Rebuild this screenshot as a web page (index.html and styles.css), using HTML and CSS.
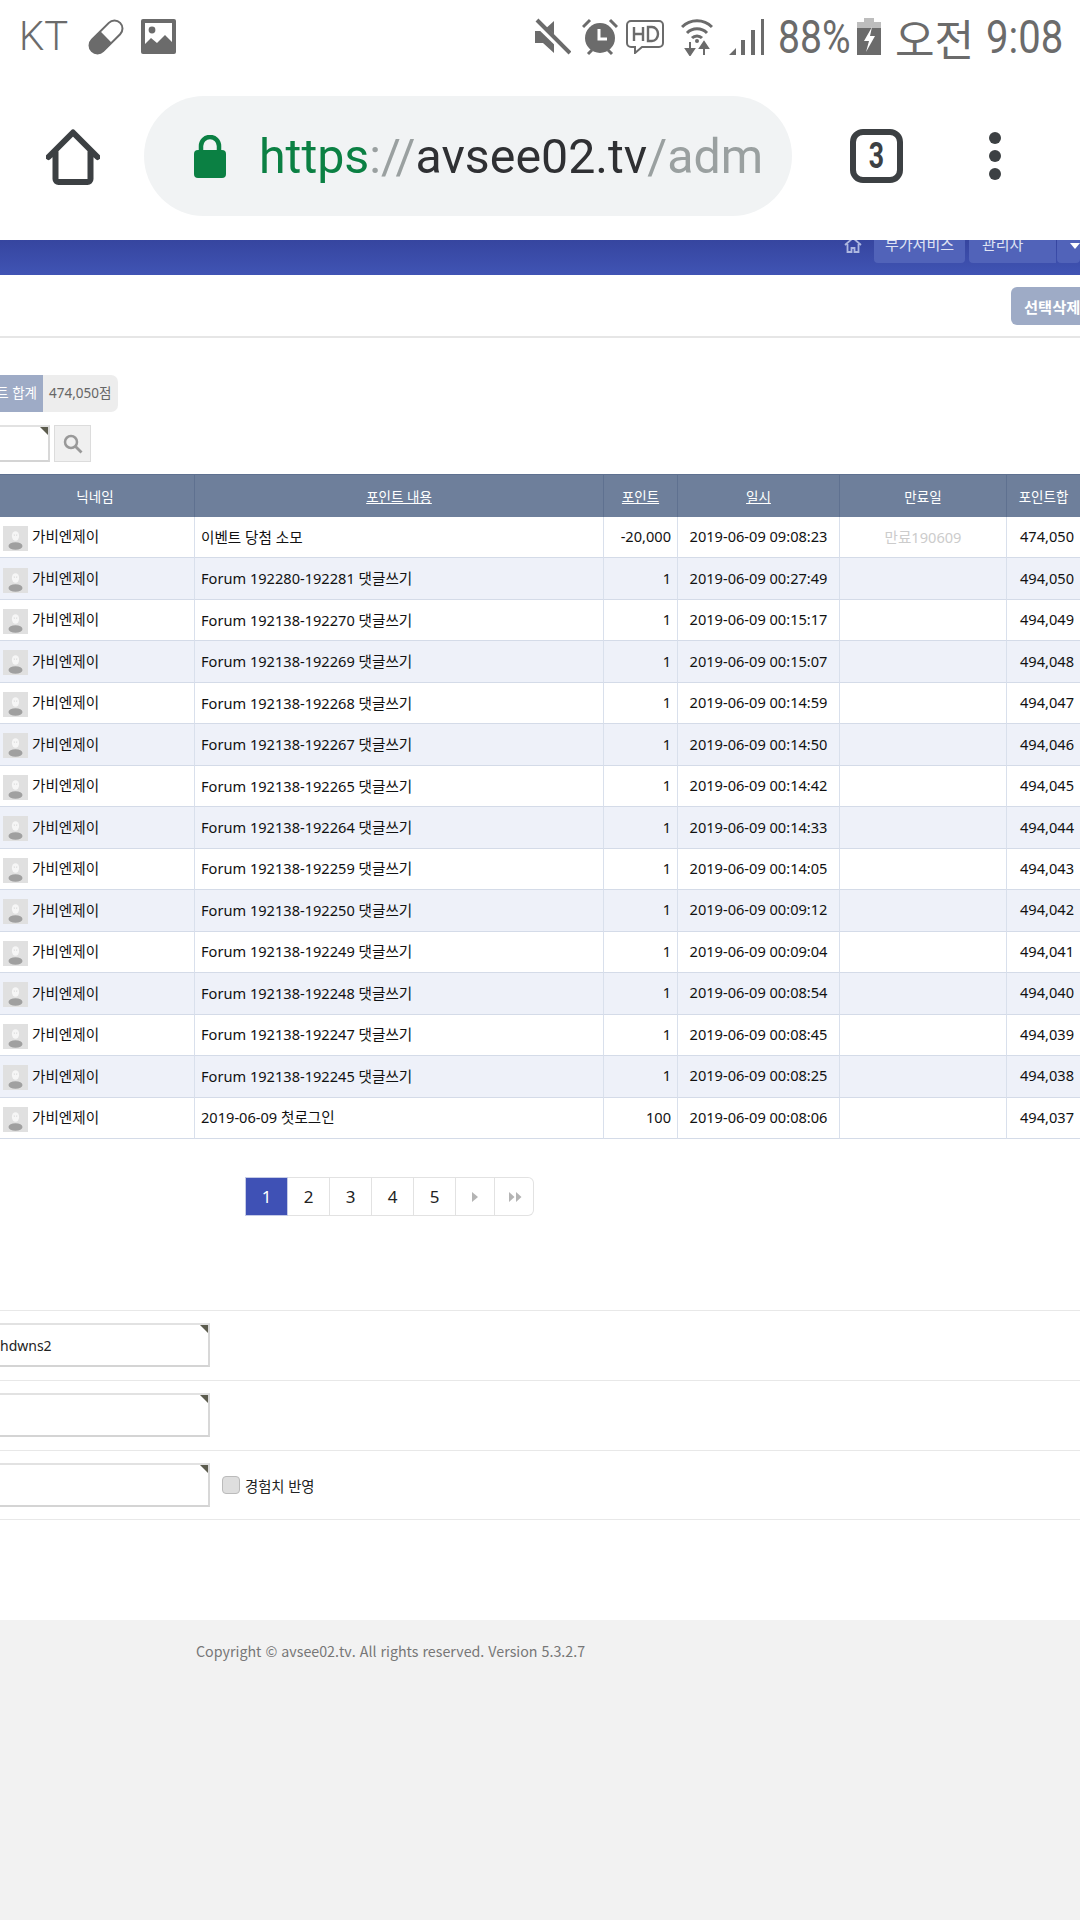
FILE: index.html
```html
<!DOCTYPE html>
<html lang="ko">
<head>
<meta charset="utf-8">
<title>포인트 관리</title>
<link rel="stylesheet" href="styles.css">
</head>
<body>
<svg class="defs" width="0" height="0" aria-hidden="true">
  <symbol id="person" viewBox="0 0 25 25">
    <rect width="25" height="25" fill="#e0e0e0"/>
    <ellipse cx="12.5" cy="10" rx="3.600" ry="4.800" fill="#f6f6f6"/>
    <rect x="10.800" y="8.600" width="1" height="1" fill="#cfcfcf"/>
    <rect x="13.200" y="8.600" width="1" height="1" fill="#cfcfcf"/>
    <ellipse cx="12.5" cy="20" rx="7" ry="3.800" fill="#a0a0a0"/>
  </symbol>
</svg>

<header class="status">
  <div class="status-left">
    <span class="carrier">KT</span>
    <svg class="ic-pill" width="36" height="36" viewBox="0 0 36 36"><g transform="rotate(-45 18 18)"><rect x="-2" y="10" width="40" height="16" rx="8" fill="#fff" stroke="#6b6b6b" stroke-width="2"/><path d="M6 10h12v16H6a8 8 0 0 1 0-16z" fill="#6b6b6b"/></g></svg>
    <svg class="ic-img" width="35" height="35" viewBox="0 0 35 35"><rect width="35" height="35" rx="2" fill="#6b6b6b"/><rect x="4" y="4" width="27" height="27" fill="#fff"/><circle cx="11" cy="11" r="3.4" fill="#6b6b6b"/><path d="M4 25l6-6 6 5 8-8 7 7v12H4z" fill="#6b6b6b"/></svg>
  </div>
  <div class="status-right">
    <svg class="ic-mute" width="38" height="38" viewBox="0 0 38 38"><path d="M2 13h8L21 3v32L10 25H2z" fill="#6b6b6b"/><path d="M2 3l34 33" stroke="#fff" stroke-width="7"/><path d="M4 2l33 33" stroke="#6b6b6b" stroke-width="4"/></svg>
    <svg class="ic-alarm" width="36" height="38" viewBox="0 0 36 38"><circle cx="18" cy="20" r="15" fill="#6b6b6b"/><path d="M17 11v10h8" fill="none" stroke="#fff" stroke-width="3"/><path d="M1 9l7-7M35 9l-7-7M6 36l4-4M30 36l-4-4" stroke="#6b6b6b" stroke-width="3"/></svg>
    <svg class="ic-hd" width="38" height="34" viewBox="0 0 38 34"><path d="M5 1h28a4 4 0 0 1 4 4v18a4 4 0 0 1-4 4H16l-7 6v-6H5a4 4 0 0 1-4-4V5a4 4 0 0 1 4-4z" fill="#fff" stroke="#6b6b6b" stroke-width="2"/><path d="M8 7v14M17 7v14M8 14h9M22 7v14h4a6 7 0 0 0 0-14z" fill="none" stroke="#6b6b6b" stroke-width="2.4"/></svg>
    <svg class="ic-wifi" width="32" height="38" viewBox="0 0 32 38"><g fill="none" stroke="#6b6b6b" stroke-width="3"><path d="M1 9a21 21 0 0 1 30 0"/><path d="M6 15a14 14 0 0 1 20 0"/><path d="M11 20a7 7 0 0 1 10 0"/></g><circle cx="16" cy="23" r="2" fill="#6b6b6b"/><path d="M9 24v10M5 31l4 6 4-6zM23 37V27M19 30l4-6 4 6z" fill="#6b6b6b" stroke="#6b6b6b" stroke-width="2"/></svg>
    <svg class="ic-signal" width="36" height="36" viewBox="0 0 36 36"><path d="M0 36l7-7v7zM12 36V21h4v15zM22 36V11h4v25zM32 36V0h3v36z" fill="#6b6b6b"/></svg>
    <span class="stat-text stat-pct">88%</span>
    <svg class="ic-batt" width="24" height="37" viewBox="0 0 24 37"><path d="M7 0h10v4H7z" fill="#bdbdbd"/><path d="M0 4h24v6H0z" fill="#bdbdbd"/><path d="M0 10h24v27H0z" fill="#6b6b6b"/><path d="M15 9l-8 14h5l-3 11 9-16h-5z" fill="#fff"/></svg>
    <span class="stat-text stat-ampm">오전</span>
    <span class="stat-text stat-time">9:08</span>
  </div>
</header>

<nav class="toolbar">
  <svg class="ic-home" width="54" height="56" viewBox="0 0 54 56"><path d="M2.500 28L27 3.500 51.500 28M9.500 23v27a3 3 0 0 0 3 3h29a3 3 0 0 0 3-3V23" fill="none" stroke="#3c4043" stroke-width="6" stroke-linecap="round" stroke-linejoin="round"/></svg>
  <div class="omnibox">
    <svg class="ic-lock" width="32" height="43" viewBox="0 0 32 43"><path d="M7 17V11a9 9 0 0 1 18 0v6" fill="none" stroke="#0b8043" stroke-width="4.500"/><rect y="15" width="32" height="28" rx="4" fill="#0b8043"/></svg>
    <span class="url"><span class="u-green">https</span><span class="u-gray">://</span><span class="u-dark">avsee02.tv</span><span class="u-gray">/adm</span></span>
  </div>
  <div class="tabs"><span>3</span></div>
  <div class="dots"><i></i><i></i><i></i></div>
</nav>

<main class="page">
  <div class="topbar">
    <svg class="ic-site-home" width="18" height="17" viewBox="0 0 18 17"><path d="M1 8l8-7 8 7M3.500 7v8h4v-4h3v4h4V7" fill="none" stroke="#aeb8e0" stroke-width="1.800"/></svg>
    <span class="top-tab tab-a">부가서비스</span>
    <span class="top-tab tab-b">관리자</span>
    <span class="top-tab tab-c"></span>
  </div>

  <div class="actions"><button class="btn-del">선택삭제</button></div>

  <div class="summary">
    <span class="sum-label"><span>포인트 합계</span></span>
    <span class="sum-value">474,050점</span>
  </div>

  <div class="search">
    <span class="field field-search"></span>
    <button class="btn-search" aria-label="검색"><svg width="20" height="20" viewBox="0 0 20 20"><circle cx="8" cy="8" r="6" fill="none" stroke="#999" stroke-width="2.500"/><path d="M12.500 12.500l6 6" stroke="#999" stroke-width="2.800"/></svg></button>
  </div>

  <table class="grid">
    <colgroup><col class="c1"><col class="c2"><col class="c3"><col class="c4"><col class="c5"><col class="c6"></colgroup>
    <thead>
      <tr><th class="th-nick">닉네임</th><th><u>포인트 내용</u></th><th><u>포인트</u></th><th><u>일시</u></th><th>만료일</th><th>포인트합</th></tr>
    </thead>
    <tbody>
      <tr><td class="nick"><svg class="avatar"><use href="#person"/></svg>가비엔제이</td><td>이벤트 당첨 소모</td><td class="num">-20,000</td><td class="date">2019-06-09 09:08:23</td><td class="exp">만료190609</td><td class="num">474,050</td></tr>
      <tr><td class="nick"><svg class="avatar"><use href="#person"/></svg>가비엔제이</td><td>Forum 192280-192281 댓글쓰기</td><td class="num">1</td><td class="date">2019-06-09 00:27:49</td><td class="exp"></td><td class="num">494,050</td></tr>
      <tr><td class="nick"><svg class="avatar"><use href="#person"/></svg>가비엔제이</td><td>Forum 192138-192270 댓글쓰기</td><td class="num">1</td><td class="date">2019-06-09 00:15:17</td><td class="exp"></td><td class="num">494,049</td></tr>
      <tr><td class="nick"><svg class="avatar"><use href="#person"/></svg>가비엔제이</td><td>Forum 192138-192269 댓글쓰기</td><td class="num">1</td><td class="date">2019-06-09 00:15:07</td><td class="exp"></td><td class="num">494,048</td></tr>
      <tr><td class="nick"><svg class="avatar"><use href="#person"/></svg>가비엔제이</td><td>Forum 192138-192268 댓글쓰기</td><td class="num">1</td><td class="date">2019-06-09 00:14:59</td><td class="exp"></td><td class="num">494,047</td></tr>
      <tr><td class="nick"><svg class="avatar"><use href="#person"/></svg>가비엔제이</td><td>Forum 192138-192267 댓글쓰기</td><td class="num">1</td><td class="date">2019-06-09 00:14:50</td><td class="exp"></td><td class="num">494,046</td></tr>
      <tr><td class="nick"><svg class="avatar"><use href="#person"/></svg>가비엔제이</td><td>Forum 192138-192265 댓글쓰기</td><td class="num">1</td><td class="date">2019-06-09 00:14:42</td><td class="exp"></td><td class="num">494,045</td></tr>
      <tr><td class="nick"><svg class="avatar"><use href="#person"/></svg>가비엔제이</td><td>Forum 192138-192264 댓글쓰기</td><td class="num">1</td><td class="date">2019-06-09 00:14:33</td><td class="exp"></td><td class="num">494,044</td></tr>
      <tr><td class="nick"><svg class="avatar"><use href="#person"/></svg>가비엔제이</td><td>Forum 192138-192259 댓글쓰기</td><td class="num">1</td><td class="date">2019-06-09 00:14:05</td><td class="exp"></td><td class="num">494,043</td></tr>
      <tr><td class="nick"><svg class="avatar"><use href="#person"/></svg>가비엔제이</td><td>Forum 192138-192250 댓글쓰기</td><td class="num">1</td><td class="date">2019-06-09 00:09:12</td><td class="exp"></td><td class="num">494,042</td></tr>
      <tr><td class="nick"><svg class="avatar"><use href="#person"/></svg>가비엔제이</td><td>Forum 192138-192249 댓글쓰기</td><td class="num">1</td><td class="date">2019-06-09 00:09:04</td><td class="exp"></td><td class="num">494,041</td></tr>
      <tr><td class="nick"><svg class="avatar"><use href="#person"/></svg>가비엔제이</td><td>Forum 192138-192248 댓글쓰기</td><td class="num">1</td><td class="date">2019-06-09 00:08:54</td><td class="exp"></td><td class="num">494,040</td></tr>
      <tr><td class="nick"><svg class="avatar"><use href="#person"/></svg>가비엔제이</td><td>Forum 192138-192247 댓글쓰기</td><td class="num">1</td><td class="date">2019-06-09 00:08:45</td><td class="exp"></td><td class="num">494,039</td></tr>
      <tr><td class="nick"><svg class="avatar"><use href="#person"/></svg>가비엔제이</td><td>Forum 192138-192245 댓글쓰기</td><td class="num">1</td><td class="date">2019-06-09 00:08:25</td><td class="exp"></td><td class="num">494,038</td></tr>
      <tr><td class="nick"><svg class="avatar"><use href="#person"/></svg>가비엔제이</td><td>2019-06-09 첫로그인</td><td class="num">100</td><td class="date">2019-06-09 00:08:06</td><td class="exp"></td><td class="num">494,037</td></tr>
    </tbody>
  </table>

  <div class="pager">
    <span class="pg pg-on">1</span><span class="pg">2</span><span class="pg">3</span><span class="pg">4</span><span class="pg">5</span>
    <span class="pg pg-arrow"><svg width="8" height="10" viewBox="0 0 8 10"><path d="M1 0l6 5-6 5z" fill="#b4b4b4"/></svg></span>
    <span class="pg pg-arrow pg-last"><svg width="14" height="10" viewBox="0 0 14 10"><path d="M1 0l5.500 5L1 10zM8 0l5.500 5L8 10z" fill="#b4b4b4"/></svg></span>
  </div>

  <form class="form">
    <div class="form-row"><span class="field field-form"><span>hdwns2</span></span></div>
    <div class="form-row"><span class="field field-form"></span></div>
    <div class="form-row"><span class="field field-form"></span><label class="check"><span class="box"></span>경험치 반영</label></div>
  </form>

  <footer class="foot">Copyright © avsee02.tv. All rights reserved. Version 5.3.2.7</footer>
</main>
</body>
</html>
```

FILE: styles.css
```css
* { box-sizing: border-box; }
html, body { margin: 0; padding: 0; }
body {
  width: 1080px;
  height: 1920px;
  overflow: hidden;
  background: #fff;
  font-family: "Noto Sans", "Noto Sans CJK KR", sans-serif;
  color: #111;
  display: flex;
  flex-direction: column;
}
.defs { display: block; height: 0; }

/* status bar */
.status {
  height: 70px;
  flex: none;
  display: flex;
  justify-content: space-between;
  align-items: center;
  padding: 3px 19px 0 19px;
  color: #6b6b6b;
  font-family: Roboto, "Noto Sans CJK KR", sans-serif;
}
.status-left, .status-right { display: flex; align-items: center; }
.carrier { font-size: 40px; font-weight: 300; width: 69px; line-height: 70px; }
.ic-img { margin-left: 17px; }
.status-right svg { flex: none; }
.ic-alarm { margin-left: 11px; }
.ic-hd { margin-left: 8px; }
.ic-wifi { margin-left: 17px; }
.ic-signal { margin-left: 16px; }
.stat-text { font-size: 46px; line-height: 70px; display: inline-block; transform-origin: left center; white-space: nowrap; }
.stat-pct { width: 79px; margin-left: 13px; transform: scaleX(.85); }
.stat-ampm { width: 91px; margin-left: 14px; font-size: 43px; font-family: "Noto Sans CJK KR", sans-serif; font-weight: 400; }
.stat-time { width: 75px; transform: scaleX(.87); }

/* browser toolbar */
.toolbar {
  height: 170px;
  flex: none;
  display: flex;
  align-items: center;
  padding: 2px 0 0 46px;
}
.ic-home { flex: none; margin-top: 2px; }
.omnibox {
  width: 648px;
  height: 120px;
  margin-left: 44px;
  border-radius: 60px;
  background: #f1f3f4;
  display: flex;
  align-items: center;
  padding-left: 50px;
}
.url { margin-left: 33px; font-family: Roboto, sans-serif; font-size: 48.3px; white-space: nowrap; }
.u-green { color: #0b8043; }
.u-gray { color: #9aa0a0; }
.u-dark { color: #2f3033; }
.tabs {
  width: 53px;
  height: 54px;
  margin-left: 58px;
  border: 6px solid #3c4043;
  border-radius: 13px;
  display: flex;
  align-items: center;
  justify-content: center;
  font: 700 36px Roboto, sans-serif;
  color: #3c4043;
}
.tabs span { display: block; transform: scaleX(.74); }
.dots { margin-left: 86px; display: flex; flex-direction: column; gap: 6px; }
.dots i { display: block; width: 12px; height: 12px; border-radius: 50%; background: #3c4043; }

/* page */
.page { flex: 1; display: flex; flex-direction: column; min-height: 0; }
.topbar {
  height: 35px;
  flex: none;
  overflow: hidden;
  background: linear-gradient(#36459f, #4054b4);
  display: flex;
  align-items: flex-end;
  padding-bottom: 12px;
  color: #fff;
  font-size: 15px;
  font-family: "Noto Sans CJK KR", sans-serif;
}
.ic-site-home { margin-left: 844px; margin-bottom: 9px; flex: none; }
.top-tab {
  flex: none;
  height: 40px;
  line-height: 42px;
  background: #5163b9;
  border-radius: 0 0 4px 4px;
  color: #dfe3f3;
  white-space: nowrap;
}
.tab-a { width: 91px; margin-left: 12px; text-align: center; }
.tab-b { width: 87px; margin-left: 4px; padding-left: 13px; border-radius: 0 0 0 4px; }
.tab-c { flex: 1; margin-left: 1px; position: relative; }
.tab-c::after {
  content: "";
  position: absolute;
  right: 0;
  top: 20px;
  border: 5px solid transparent;
  border-top: 6px solid #fff;
  border-bottom: 0;
}
.actions {
  height: 63px;
  flex: none;
  border-bottom: 2px solid #e6e6e6;
  padding: 12px 0 0 1011px;
  overflow: hidden;
}
.btn-del {
  display: block;
  width: 90px;
  height: 38px;
  border: 0;
  padding: 0 0 0 13px;
  text-align: left;
  white-space: nowrap;
  overflow: hidden;
  border-radius: 6px 0 0 6px;
  background: #9eabc6;
  color: #fff;
  font: 700 15.3px "Noto Sans CJK KR", sans-serif;
}
.summary {
  flex: none;
  height: 37px;
  width: 118px;
  margin-top: 37px;
  display: flex;
  font-size: 13.5px;
  line-height: 37px;
}
.sum-label {
  width: 43px;
  background: #9eabc6;
  color: #fff;
  overflow: hidden;
  display: flex;
  justify-content: flex-end;
  padding-right: 6px;
  white-space: nowrap;
  flex: none;
}
.sum-label span { flex: none; }
.sum-value {
  flex: 1;
  background: #ededed;
  color: #666;
  border-radius: 0 7px 7px 0;
  padding-left: 6px;
  white-space: nowrap;
}
.search { flex: none; display: flex; gap: 4px; margin-top: 13px; height: 37px; }
.field {
  display: block;
  position: relative;
  background: #fff;
  border: 2px solid #e2e2e2;
  border-left: 0;
  border-bottom-color: #d4d4d4;
  border-right-color: #d8d8d8;
}
.field::after {
  content: "";
  position: absolute;
  top: 0;
  right: 0;
  border-style: solid;
  border-width: 0 8px 8px 0;
  border-color: transparent #5c5c4e transparent transparent;
}
.field-search { width: 50px; height: 37px; }
.btn-search {
  width: 37px;
  height: 37px;
  padding: 0;
  border: 1px solid #dcdcdc;
  background: #f0f0f0;
  display: flex;
  align-items: center;
  justify-content: center;
}

/* table */
.grid {
  flex: none;
  margin-top: 12px;
  width: 1080px;
  table-layout: fixed;
  border-collapse: separate;
  border-spacing: 0;
  font-size: 14.6px;
}
.c1 { width: 194px; }
.c2 { width: 409px; }
.c3 { width: 74px; }
.c4 { width: 162px; }
.c5 { width: 167px; }
.c6 { width: 74px; }
.grid th {
  height: 43px;
  padding: 0 0 1px;
  background: #6e7f9b;
  color: #fff;
  font-weight: 400;
  font-size: 13.5px;
  border-top: 1px solid #5f7190;
  border-left: 1px solid #5f7190;
  text-align: center;
}
.grid th:first-child { border-left: 0; }
.grid th.th-nick { padding-right: 4px; }
.grid td {
  height: 41.47px;
  padding: 0 6px 2px;
  border-left: 1px solid #d9e0ec;
  border-bottom: 1px solid #d4dbe8;
  color: #111;
  white-space: nowrap;
  overflow: hidden;
  background: #fff;
}
.grid tbody tr:nth-child(even) td { background: #eef1f9; }
.grid td:first-child { border-left: 0; }
.grid td.nick { padding: 2px 0 0 3px; }
.avatar { width: 25px; height: 25px; vertical-align: middle; margin-right: 4px; }
.grid td.num { text-align: right; }
.grid td.date { text-align: center; }
.grid td.exp { text-align: center; color: #ccc; }

/* pager */
.pager {
  flex: none;
  display: flex;
  width: 289px;
  height: 39px;
  margin: 38px 0 0 245px;
  border: 1px solid #e2e2e2;
  border-left: 0;
  border-radius: 0 6px 6px 0;
  font-size: 17px;
  color: #222;
}
.pg {
  width: 42px;
  flex: none;
  display: flex;
  align-items: center;
  justify-content: center;
  border-right: 1px solid #e2e2e2;
}
.pg-on { width: 43px; margin: -1px 0; background: #3f51b5; color: #fff; border: 1px solid #c5cbe6; }
.pg-arrow { width: 39px; }
.pg-last { border-right: 0; }

/* form */
.form { flex: none; margin-top: 94px; border-top: 1px solid #e8e8e8; }
.form-row {
  height: 69.8px;
  border-bottom: 1px solid #e8e8e8;
  display: flex;
  align-items: center;
}
.field-form { width: 210px; height: 44px; line-height: 42px; font-size: 14px; color: #222; }
.check { display: flex; align-items: center; margin-left: 12px; color: #222; font-size: 14.3px; }
.box {
  width: 18px;
  height: 18px;
  margin-right: 5px;
  background: #dedede;
  border: 1px solid #bbb;
  border-radius: 4px;
}

/* footer */
.foot {
  flex: 1;
  margin-top: 99.5px;
  padding: 20px 0 0 196px;
  background: #f2f2f2;
  color: #777;
  font: 14.25px "Noto Sans CJK KR", sans-serif;
}
```
